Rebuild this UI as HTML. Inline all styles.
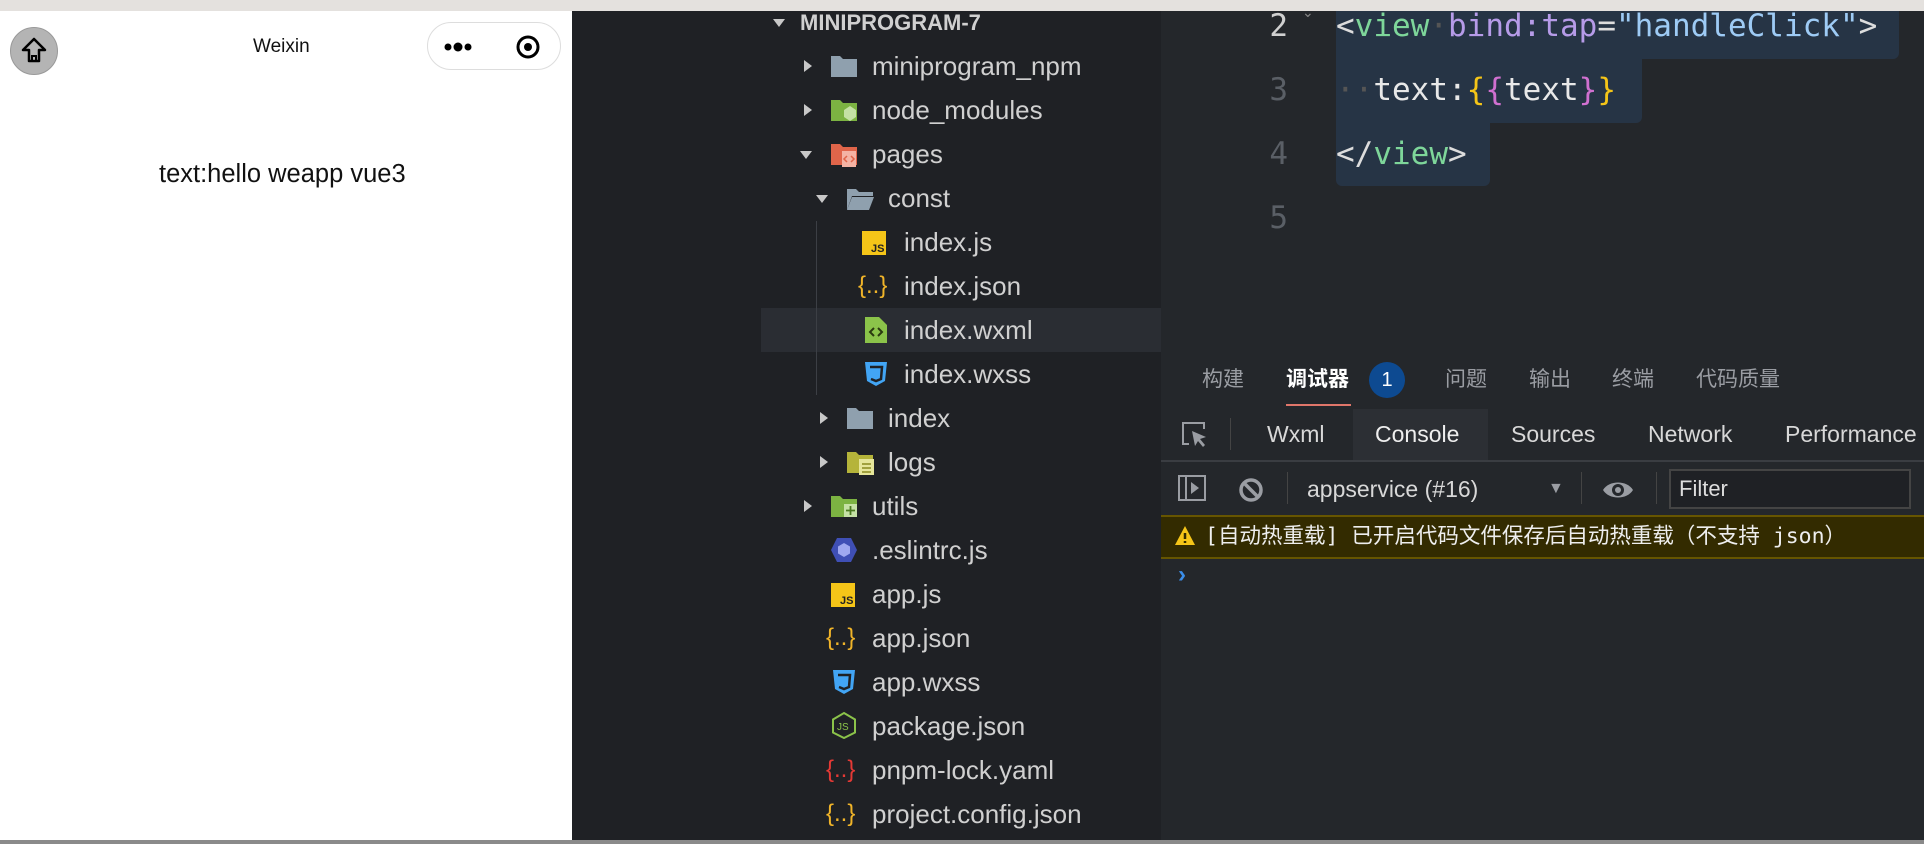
<!DOCTYPE html>
<html><head><meta charset="utf-8"><style>
*{margin:0;padding:0;box-sizing:border-box}
body{width:1924px;height:844px;overflow:hidden;background:#24272b;position:relative;font-family:"Liberation Sans","Noto Sans CJK SC",sans-serif}
.a{position:absolute;white-space:nowrap}
.t{color:#d0d0d0;font-size:26px;line-height:44px;height:44px}
.arr{position:absolute;width:0;height:0}
.ar{border-left:8px solid #c8c8c8;border-top:6px solid transparent;border-bottom:6px solid transparent}
.ad{border-top:8px solid #c8c8c8;border-left:6px solid transparent;border-right:6px solid transparent}
.code{font-family:"DejaVu Sans Mono","Liberation Mono",monospace;font-size:31px;line-height:64px}
.tab{color:#9a9da3;font-size:21px;line-height:40px}
.dt{color:#d8d8d8;font-size:23px;line-height:48px}
</style></head><body>
<div class="a" style="left:0;top:0;width:1924px;height:11px;background:#e4e1de"></div>
<div class="a" style="left:0;top:11px;width:572px;height:833px;background:#fff"></div>
<div class="a" style="left:0;top:840px;width:1924px;height:4px;background:#8a8a8a"></div>
<div class="a" style="left:10px;top:27px;width:48px;height:48px;border-radius:50%;background:#b4b4b4;border:1px solid #999"></div>
<svg class="a" style="left:20px;top:36px" width="28" height="30" viewBox="0 0 28 30"><path d="M14 3 L25 14 H19 V25 H9 V14 H3 Z" fill="none" stroke="#000" stroke-width="2.5" stroke-linejoin="round"/><path d="M12 25 V20 H16 V25" fill="none" stroke="#000" stroke-width="2"/></svg>
<div class="a" style="left:253px;top:36px;font-size:19px;color:#111">Weixin</div>
<div class="a" style="left:427px;top:22px;width:134px;height:48px;border-radius:24px;border:1px solid #ddd;background:#fff"></div>
<svg class="a" style="left:440px;top:34px" width="110" height="26"><circle cx="8" cy="13" r="3.5"/><circle cx="18" cy="13" r="4.5"/><circle cx="28" cy="13" r="3.5"/><circle cx="88" cy="13" r="10" fill="none" stroke="#000" stroke-width="3"/><circle cx="88" cy="13" r="4"/></svg>
<div class="a" style="left:159px;top:160px;font-size:25.5px;color:#111">text:hello weapp vue3</div>
<div class="a" style="left:572px;top:11px;width:589px;height:829px;background:#1f2125"></div>
<div class="a" style="left:761px;top:308px;width:400px;height:44px;background:#2a2d33"></div>
<div class="a" style="left:816px;top:221px;width:1px;height:174px;background:#3c3f45"></div>
<div class="a ad arr" style="left:773px;top:19px"></div>
<div class="a" style="left:800px;top:9px;font-size:22px;font-weight:bold;color:#d0d0d0;line-height:28px">MINIPROGRAM-7</div>
<div class="a ar arr" style="left:804px;top:60px"></div>
<svg class="a" style="left:830px;top:53px" width="28" height="26"><path d="M1 3h9l3 3h14v18H1z" fill="#8fa0ae"/></svg>
<div class="a t" style="left:872px;top:44px">miniprogram_npm</div>
<div class="a ar arr" style="left:804px;top:104px"></div>
<svg class="a" style="left:830px;top:97px" width="28" height="26"><path d="M1 3h9l3 3h14v18H1z" fill="#7cb342"/><path d="M20 9l6 4v7l-6 4-6-4v-7z" fill="#c5e1a5"/></svg>
<div class="a t" style="left:872px;top:88px">node_modules</div>
<div class="a ad arr" style="left:800px;top:151px"></div>
<svg class="a" style="left:830px;top:141px" width="28" height="28"><path d="M1 3h9l3 3h14v18H1z" fill="#e0654a"/><rect x="12" y="10" width="14" height="16" fill="#f4b3a4"/><path d="M17 15l-3 3 3 3M21 15l3 3-3 3" stroke="#e0654a" fill="none" stroke-width="1.5"/></svg>
<div class="a t" style="left:872px;top:132px">pages</div>
<div class="a ad arr" style="left:816px;top:195px"></div>
<svg class="a" style="left:846px;top:186px" width="28" height="26"><path d="M1 3h9l3 3h14v4H6L1 24z" fill="#8fa0ae"/><path d="M6 11h22l-5 13H1z" fill="#8fa0ae"/></svg>
<div class="a t" style="left:888px;top:176px">const</div>
<svg class="a" style="left:862px;top:231px" width="26" height="26"><rect width="24" height="24" fill="#f5c518"/><text x="9" y="21" font-size="11" font-family="Liberation Sans" font-weight="bold" fill="#222">JS</text></svg>
<div class="a t" style="left:904px;top:220px">index.js</div>
<div class="a" style="left:858px;top:264px;color:#f0b429;font-size:24px;line-height:44px">{..}</div>
<div class="a t" style="left:904px;top:264px">index.json</div>
<svg class="a" style="left:864px;top:316px" width="24" height="28"><path d="M1 1h14l8 8v18H1z" fill="#8bc34a"/><path d="M10 12l-4 4 4 4M14 12l4 4-4 4" stroke="#2a3a10" fill="none" stroke-width="2"/></svg>
<div class="a t" style="left:904px;top:308px">index.wxml</div>
<svg class="a" style="left:863px;top:361px" width="26" height="26"><path d="M2 1h22l-2 19-9 5-9-5 z" fill="#42a5f5"/><path d="M7 6h12l-1 12-5 2-5-2" fill="none" stroke="#1f2125" stroke-width="2.5"/></svg>
<div class="a t" style="left:904px;top:352px">index.wxss</div>
<div class="a ar arr" style="left:820px;top:412px"></div>
<svg class="a" style="left:846px;top:405px" width="28" height="26"><path d="M1 3h9l3 3h14v18H1z" fill="#8fa0ae"/></svg>
<div class="a t" style="left:888px;top:396px">index</div>
<div class="a ar arr" style="left:820px;top:456px"></div>
<svg class="a" style="left:846px;top:449px" width="30" height="28"><path d="M1 3h9l3 3h14v18H1z" fill="#b5b43a"/><rect x="13" y="10" width="15" height="16" fill="#e6e69a"/><path d="M16 15h9M16 19h9M16 23h9" stroke="#8a8a20" stroke-width="1.5"/></svg>
<div class="a t" style="left:888px;top:440px">logs</div>
<div class="a ar arr" style="left:804px;top:500px"></div>
<svg class="a" style="left:830px;top:493px" width="30" height="28"><path d="M1 3h9l3 3h14v18H1z" fill="#7cb342"/><rect x="14" y="11" width="13" height="13" fill="#c5e1a5"/><path d="M20.5 13v9M16 17.5h9" stroke="#4a7a20" stroke-width="1.8"/></svg>
<div class="a t" style="left:872px;top:484px">utils</div>
<svg class="a" style="left:830px;top:536px" width="28" height="28"><path d="M7 2h14l6 12-6 12H7L1 14z" fill="#3f4fb5"/><path d="M14 7l6 3.5v7L14 21l-6-3.5v-7z" fill="#9fa8f0"/></svg>
<div class="a t" style="left:872px;top:528px">.eslintrc.js</div>
<svg class="a" style="left:831px;top:583px" width="26" height="26"><rect width="24" height="24" fill="#f5c518"/><text x="9" y="21" font-size="11" font-family="Liberation Sans" font-weight="bold" fill="#222">JS</text></svg>
<div class="a t" style="left:872px;top:572px">app.js</div>
<div class="a" style="left:826px;top:616px;color:#f0b429;font-size:24px;line-height:44px">{..}</div>
<div class="a t" style="left:872px;top:616px">app.json</div>
<svg class="a" style="left:831px;top:669px" width="26" height="26"><path d="M2 1h22l-2 19-9 5-9-5 z" fill="#42a5f5"/><path d="M7 6h12l-1 12-5 2-5-2" fill="none" stroke="#1f2125" stroke-width="2.5"/></svg>
<div class="a t" style="left:872px;top:660px">app.wxss</div>
<svg class="a" style="left:830px;top:711px" width="28" height="28"><path d="M14 2l11 6.5v13L14 27 3 21.5v-13z" fill="none" stroke="#8bc34a" stroke-width="2"/><text x="7" y="19" font-size="10" font-family="Liberation Sans" fill="#8bc34a">JS</text></svg>
<div class="a t" style="left:872px;top:704px">package.json</div>
<div class="a" style="left:826px;top:748px;color:#e53935;font-size:24px;line-height:44px">{..}</div>
<div class="a t" style="left:872px;top:748px">pnpm-lock.yaml</div>
<div class="a" style="left:826px;top:792px;color:#f0b429;font-size:24px;line-height:44px">{..}</div>
<div class="a t" style="left:872px;top:792px">project.config.json</div>
<div class="a" style="left:1161px;top:11px;width:763px;height:345px;background:#24272b"></div>
<div class="a" style="left:1336px;top:11px;width:563px;height:48px;background:#263445;border-radius:0 0 6px 0"></div>
<div class="a" style="left:1336px;top:59px;width:306px;height:64px;background:#263445;border-radius:0 0 6px 0"></div>
<div class="a" style="left:1336px;top:123px;width:154px;height:63px;background:#263445;border-radius:0 0 6px 6px"></div>
<div class="a code" style="left:1248px;top:-6px;width:40px;text-align:right;color:#d0d0d0">2</div>
<div class="a code" style="left:1248px;top:58px;width:40px;text-align:right;color:#5a5f66">3</div>
<div class="a code" style="left:1248px;top:122px;width:40px;text-align:right;color:#5a5f66">4</div>
<div class="a code" style="left:1248px;top:186px;width:40px;text-align:right;color:#5a5f66">5</div>
<div class="a" style="left:1302px;top:4px;color:#888;font-size:14px">⌄</div>
<div class="a code" style="left:1336px;top:-6px"><span style="color:#ddd">&lt;</span><span style="color:#7ed69a">view</span><span style="color:#555">·</span><span style="color:#b69be8">bind:tap</span><span style="color:#ddd">=</span><span style="color:#9ecbf5">"handleClick"</span><span style="color:#ddd">&gt;</span></div>
<div class="a code" style="left:1336px;top:58px"><span style="color:#555">··</span><span style="color:#e8e8e8">text:</span><span style="color:#f5c518">{</span><span style="color:#d070d0">{</span><span style="color:#e8e8e8">text</span><span style="color:#d070d0">}</span><span style="color:#f5c518">}</span></div>
<div class="a code" style="left:1336px;top:122px"><span style="color:#ddd">&lt;/</span><span style="color:#7ed69a">view</span><span style="color:#ddd">&gt;</span></div>
<div class="a" style="left:1161px;top:356px;width:763px;height:484px;background:#24272b"></div>
<div class="a tab" style="left:1202px;top:360px">构建</div>
<div class="a tab" style="left:1286px;top:360px;color:#fff;font-weight:bold">调试器</div>
<div class="a" style="left:1286px;top:404px;width:65px;height:2px;background:#e0766a"></div>
<div class="a" style="left:1369px;top:362px;width:36px;height:36px;border-radius:50%;background:#0d4a91;color:#fff;font-size:20px;text-align:center;line-height:36px">1</div>
<div class="a tab" style="left:1445px;top:360px">问题</div>
<div class="a tab" style="left:1529px;top:360px">输出</div>
<div class="a tab" style="left:1612px;top:360px">终端</div>
<div class="a tab" style="left:1696px;top:360px">代码质量</div>
<div class="a" style="left:1353px;top:409px;width:135px;height:51px;background:#2c2f34"></div>
<svg class="a" style="left:1180px;top:420px" width="30" height="30"><path d="M9 24H3V3h21v6" fill="none" stroke="#9a9da3" stroke-width="2"/><path d="M12 11l14 6-6 2 5 6-2 2-5-6-3 5z" fill="#9a9da3"/></svg>
<div class="a" style="left:1230px;top:418px;width:1px;height:32px;background:#444"></div>
<div class="a dt" style="left:1267px;top:410px">Wxml</div>
<div class="a dt" style="left:1375px;top:410px;color:#eee">Console</div>
<div class="a dt" style="left:1511px;top:410px">Sources</div>
<div class="a dt" style="left:1648px;top:410px">Network</div>
<div class="a dt" style="left:1785px;top:410px">Performance</div>
<div class="a" style="left:1161px;top:460px;width:763px;height:2px;background:#3a3d42"></div>
<svg class="a" style="left:1178px;top:475px" width="30" height="28"><rect x="1" y="1" width="26" height="24" fill="none" stroke="#9a9da3" stroke-width="2"/><path d="M8 1v24" stroke="#9a9da3" stroke-width="2"/><path d="M13 7l8 6-8 6z" fill="#9a9da3"/></svg>
<svg class="a" style="left:1237px;top:476px" width="28" height="28"><circle cx="14" cy="14" r="10" fill="none" stroke="#9a9da3" stroke-width="3.5"/><path d="M7 7l14 14" stroke="#9a9da3" stroke-width="3.5"/></svg>
<div class="a" style="left:1287px;top:472px;width:1px;height:32px;background:#444"></div>
<div class="a" style="left:1307px;top:472px;font-size:23px;color:#d8d8d8;line-height:34px">appservice (#16)</div>
<div class="a" style="left:1548px;top:472px;font-size:16px;color:#9a9da3;line-height:34px">▼</div>
<div class="a" style="left:1581px;top:472px;width:1px;height:32px;background:#444"></div>
<svg class="a" style="left:1601px;top:478px" width="34" height="24"><path d="M2 12C8 2 26 2 32 12 26 22 8 22 2 12z" fill="#9a9da3"/><circle cx="17" cy="12" r="6" fill="#24272b"/><circle cx="17" cy="12" r="3" fill="#9a9da3"/></svg>
<div class="a" style="left:1656px;top:472px;width:1px;height:32px;background:#444"></div>
<div class="a" style="left:1669px;top:469px;width:242px;height:40px;border:2px solid #444;background:#1f2125;color:#ddd;font-size:22px;line-height:36px;padding-left:8px">Filter</div>
<div class="a" style="left:1161px;top:515px;width:763px;height:44px;background:#332b00;border-top:2px solid #665500;border-bottom:2px solid #665500"></div>
<svg class="a" style="left:1174px;top:525px" width="22" height="22"><path d="M11 1L21 20H1z" fill="#f5c518"/><path d="M11 8v6M11 16v2" stroke="#332b00" stroke-width="2.5"/></svg>
<div class="a" style="left:1205px;top:517px;font-family:'DejaVu Sans Mono','Noto Sans CJK SC',monospace;font-size:21.5px;line-height:40px;color:#eee">[自动热重载] 已开启代码文件保存后自动热重载（不支持 json）</div>
<div class="a" style="left:1178px;top:558px;color:#3b8eea;font-size:24px;line-height:34px;font-weight:bold">›</div>
</body></html>
